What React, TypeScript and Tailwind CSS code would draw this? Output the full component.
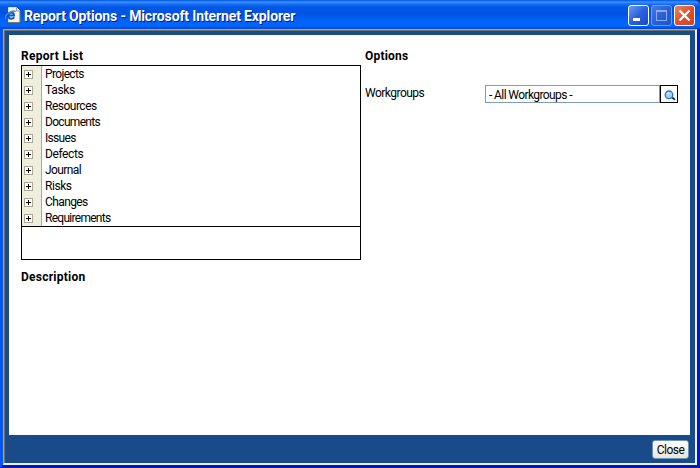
import React from "react";

const reports = [
  { name: "Projects", spacing: "tracking-[-0.65px]" },
  { name: "Tasks", spacing: "tracking-[-0.3px]" },
  { name: "Resources", spacing: "tracking-[-0.5px]" },
  { name: "Documents", spacing: "tracking-[-0.7px]" },
  { name: "Issues", spacing: "tracking-[-0.7px]" },
  { name: "Defects", spacing: "tracking-[-0.4px]" },
  { name: "Journal", spacing: "tracking-[-0.6px]" },
  { name: "Risks", spacing: "tracking-[-0.45px]" },
  { name: "Changes", spacing: "tracking-[-0.6px]" },
  { name: "Requirements", spacing: "tracking-[-0.72px]" },
];

function PageIcon() {
  return (
    <svg width="17" height="17" viewBox="0 0 17 17" className="shrink-0">
      <path d="M3.5 .5H11.5L14.5 3.5V15.5H3.5Z" fill="#f5f4ec" stroke="#e4e0cd" />
      <path d="M15 4V15.5H3" fill="none" stroke="#77745f" />
      <path d="M11.5 .5V4H15" fill="#fff" stroke="#99988a" />
      <path d="M3.5 8.6H9Q8.9 5.4 6.2 5.4Q3.2 5.8 3.2 8.6Q3.5 11.8 6.2 11.8Q8.2 11.8 9.2 10.4" fill="none" stroke="#1259b8" strokeWidth="2" />
      <path d="M1 12Q-1 9.5 3.6 6Q8.3 3 10.8 4.5" fill="none" stroke="#3d8ce0" strokeWidth="1.3" />
    </svg>
  );
}

function PlusBox() {
  return (
    <svg width="9" height="9" viewBox="0 0 9 9" shapeRendering="crispEdges">
      <rect x=".5" y=".5" width="8" height="8" fill="#fff" stroke="#aaa999" />
      <path d="M2 4.5H7M4.5 2V7" stroke="#000" />
    </svg>
  );
}

function SearchIcon() {
  return (
    <svg width="12" height="11" viewBox="0 0 12 11" className="relative left-px top-px shrink-0">
      <path d="M7.6 7L11 9.8" stroke="#123c70" strokeWidth="2" />
      <circle cx="5" cy="4.8" r="3.8" fill="#9ed4ff" stroke="#3477b3" strokeWidth="1.3" />
      <path d="M3 4Q4 2.5 5.4 3" fill="none" stroke="#e4f5ff" />
    </svg>
  );
}

function WindowButton({ kind }: { kind: "minimize" | "maximize" | "close" }) {
  const color =
    kind === "close"
      ? "border-white bg-linear-to-br from-[#ee8566] via-[#e44d27] to-[#d0451d]"
      : kind === "maximize"
        ? "border-[#6f9bf0] bg-linear-to-br from-[#457be5] via-[#2860dc] to-[#1d54d0]"
        : "border-white bg-linear-to-br from-[#7298ef] via-[#2860dd] to-[#164bc8]";
  return (
    <button className={`h-[21px] w-[21px] rounded-[3px] border ${color}`} aria-label={kind}>
      <svg width="19" height="19" viewBox="0 0 19 19">
        {kind === "minimize" && <path d="M4 13.5H11" stroke="#fff" strokeWidth="3" />}
        {kind === "maximize" && (
          <g fill="none" stroke="#8ba9f2" shapeRendering="crispEdges">
            <path d="M4.5 4.5H14.5V14.5H4.5Z" />
            <path d="M4 5.5H15" />
          </g>
        )}
        {kind === "close" && <path d="M4.5 4.5L14.5 14.5M14.5 4.5L4.5 14.5" stroke="#fff" strokeWidth="2.4" />}
      </svg>
    </button>
  );
}

export default function App() {
  return (
    <div className="bg-[#16366b]">
      <div className="flex h-[468px] w-[700px] flex-col overflow-hidden rounded-tr-[6px] bg-[#0831d9] font-[Roboto,sans-serif] text-[12px] leading-4 text-black">
        <header className="flex h-[29px] shrink-0 items-start bg-[linear-gradient(#0050e0_0px,#3b91ff_2px,#1672f5_4px,#0057e5_7px,#0054e3_14px,#0062fb_20px,#0065ff_26px,#0046cc_29px)] pr-[5px] pl-[5px]">
          <div className="pt-[7px]"><PageIcon /></div>
          <h1 className="pt-2 pl-[2px] text-[14px] leading-4 font-bold tracking-[-0.13px] whitespace-nowrap text-white [text-shadow:1px_1px_0_#0a1883]">
            Report Options - Microsoft Internet Explorer
          </h1>
          <div className="ml-auto flex gap-0.5 pt-[5px]">
            <WindowButton kind="minimize" />
            <WindowButton kind="maximize" />
            <WindowButton kind="close" />
          </div>
        </header>
        <div className="flex min-h-0 flex-1 border-r-[3px] border-b-[3px] border-l-[3px] border-t-0 border-r-[#0019cf] border-b-[#0019b8] border-l-[#0855ee]">
          <div className="flex flex-1 flex-col border-t border-r-2 border-b-2 border-l border-t-[#aca899] border-r-[#f1efe2] border-b-[#f1efe2] border-l-[#aca899]">
            <div className="flex flex-1 flex-col border-t border-l border-[#716f64] bg-[#194b8b] pt-1 pr-[5px] pl-1">
              <main className="flex h-[400px] shrink-0 bg-white pt-[13px] pl-3">
                <section className="w-[340px] shrink-0">
                  <h2 className="h-[17px] font-bold tracking-[0.28px]">Report List</h2>
                  <div className="h-[195px] border border-black">
                    <ul className="border-b border-black">
                      {reports.map((report) => (
                        <li key={report.name} className="flex h-4">
                          <span className="flex w-5 items-center border-r border-[#aca899] bg-[#eeeedd] pt-px pl-0.5"><PlusBox /></span>
                          <span className={`pl-[3px] ${report.spacing}`}>{report.name}</span>
                        </li>
                      ))}
                    </ul>
                  </div>
                  <h2 className="mt-[9px] font-bold tracking-[0.25px]">Description</h2>
                </section>
                <section className="ml-1 w-[313px]">
                  <h2 className="h-[37px] font-bold tracking-[0.2px]">Options</h2>
                  <div className="flex h-[18px]">
                    <label htmlFor="workgroups" className="w-[120px] tracking-[-0.52px]">Workgroups</label>
                    <input id="workgroups" readOnly value="- All Workgroups -" className="h-[18px] w-[175px] border border-[#7f9db9] pt-[2px] pl-[3px] tracking-[-0.6px] outline-none" />
                    <button aria-label="Find workgroup" className="flex h-[18px] w-[18px] items-center justify-center border border-black"><SearchIcon /></button>
                  </div>
                </section>
              </main>
              <footer className="flex justify-end pt-[5px] pr-px">
                <button className="h-[19px] w-[37px] rounded-[3px] border border-[#6d93b5] bg-linear-to-b from-white to-[#e7e5dc] leading-4 tracking-[-0.5px]">Close</button>
              </footer>
            </div>
          </div>
        </div>
      </div>
    </div>
  );
}
